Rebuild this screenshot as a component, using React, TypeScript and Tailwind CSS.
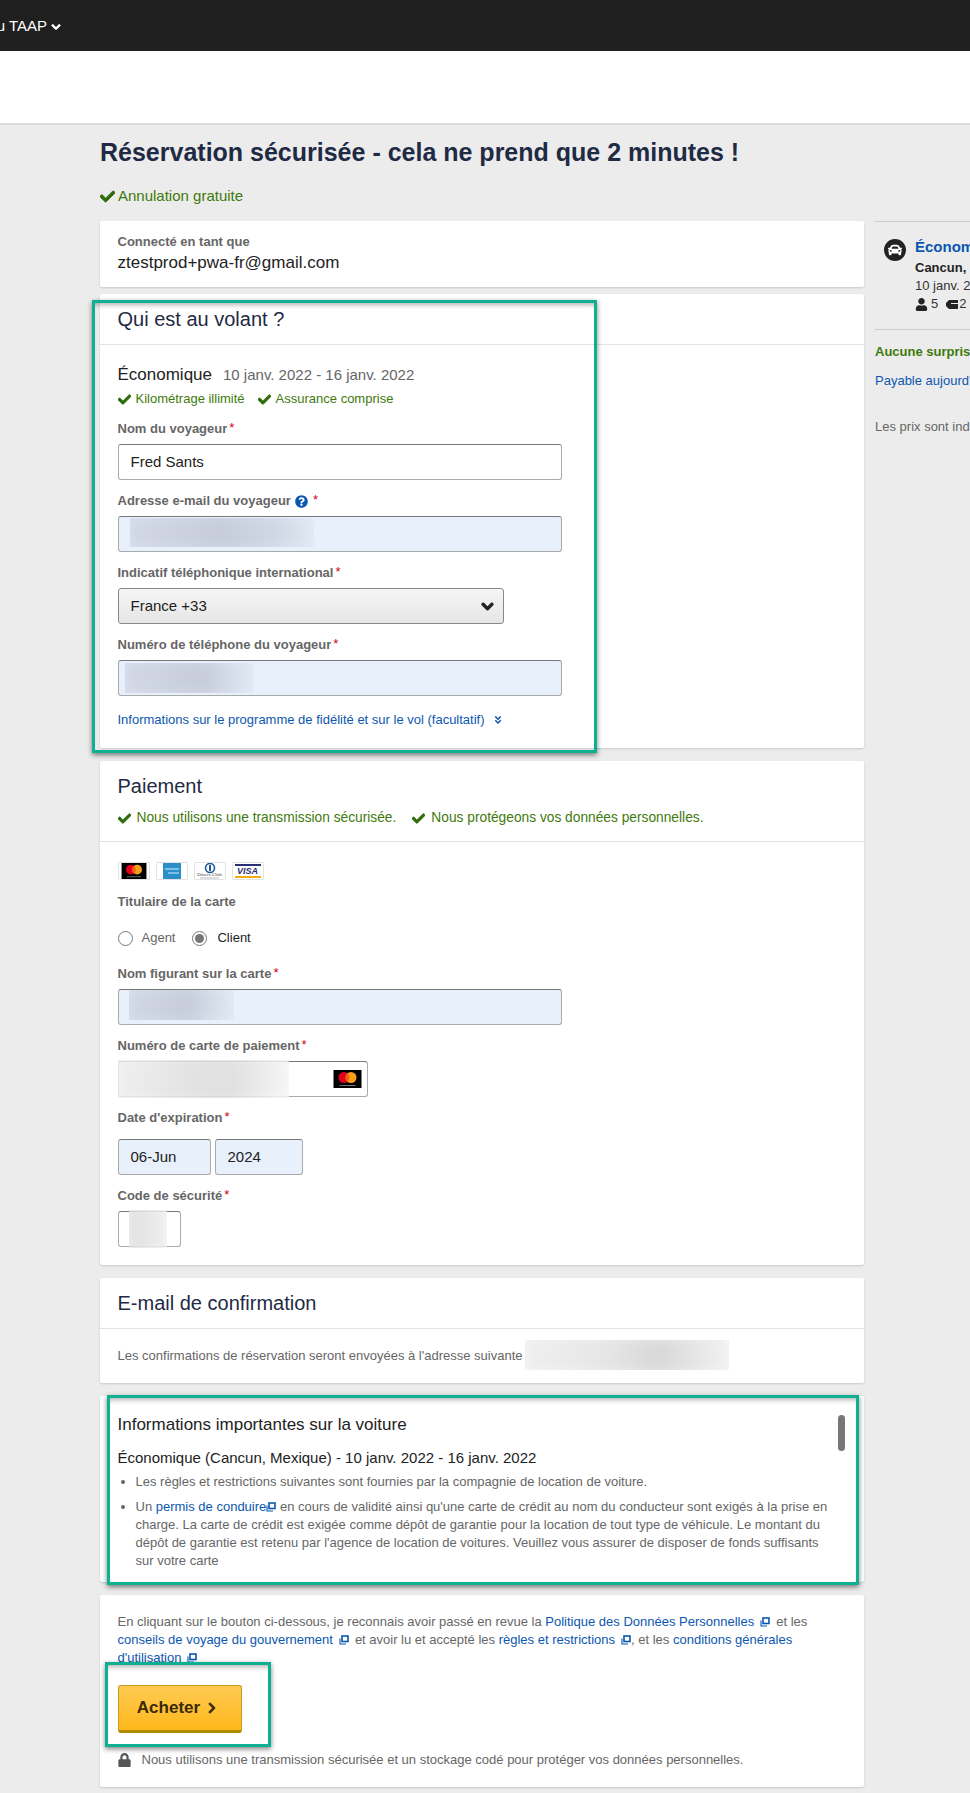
import React from 'react';
import { FaCar, FaCheck, FaChevronDown, FaChevronRight, FaAngleDoubleDown, FaLock, FaQuestionCircle, FaUser } from 'react-icons/fa';

const Check: React.FC = () => <FaCheck className="w-[13px] h-[13px] shrink-0 text-[#2f6d0c] stroke-current stroke-[30]" />;

const External: React.FC = () => (
  <svg viewBox="0 0 10 10" className="inline-block w-[10px] h-[10px] align-[-1px] text-[#0b57b0]">
    <rect x="3" y="1" width="6" height="5.5" fill="none" stroke="currentColor" strokeWidth="1.6" />
    <path d="M1 3.5v5.5h6" fill="none" stroke="currentColor" strokeWidth="1.1" />
  </svg>
);

const Label: React.FC<{ text: string; required?: boolean; children?: React.ReactNode }> = ({ text, required = true, children }) => (
  <div className="h-4 pt-[2px] flex items-center text-[13px] font-bold text-[#666] leading-4">
    <span>{text}</span>
    {children}
    {required && <span className="text-[#d0021b] font-normal ml-[2px] relative top-[-1px]">*</span>}
  </div>
);

const Input: React.FC<{ value?: string; filled?: boolean; className?: string; children?: React.ReactNode }> = ({
  value,
  filled,
  className = 'w-[444px]',
  children,
}) => (
  <div
    className={`relative h-9 mt-2 border border-[#aaa] border-t-[#777] rounded-[3px] flex items-center px-3 text-[15px] text-[#222] ${
      filled ? 'bg-[#e8f0fb]' : 'bg-white'
    } ${className}`}
  >
    {value}
    {children}
  </div>
);

const Blur: React.FC<{ className: string; blob: string }> = ({ className, blob }) => (
  <div className={`absolute overflow-hidden ${className}`}>
    <div className={`absolute inset-[-6px] blur-[7px] ${blob}`} />
  </div>
);

const Mastercard: React.FC<{ className?: string }> = ({ className }) => (
  <svg viewBox="0 0 28 18" className={className}>
    <rect width="28" height="18" fill="#000" />
    <circle cx="10.5" cy="7.5" r="5.5" fill="#e2001a" />
    <circle cx="17.5" cy="7.5" r="5.5" fill="#f79e1b" />
    <path d="M14 3.3a5.5 5.5 0 0 1 0 8.4a5.5 5.5 0 0 1 0-8.4z" fill="#f2600f" />
    <rect x="6" y="15" width="16" height="1" fill="#777" />
  </svg>
);

const CardLogos: React.FC = () => (
  <div className="flex gap-[6px] h-[18px]">
    <div className="w-[32px] h-[18px] border border-[#e3e3e3] rounded-[1px] flex items-center justify-center bg-white">
      <Mastercard className="w-[28px] h-[16px]" />
    </div>
    <div className="w-[32px] h-[18px] border border-[#e3e3e3] rounded-[1px] flex items-center justify-center bg-white">
      <svg viewBox="0 0 18 16" className="w-[18px] h-[16px]">
        <rect width="18" height="16" fill="#2a8fc9" />
        <rect x="2" y="5" width="14" height="2" fill="#7fc0e2" />
        <rect x="5" y="9" width="11" height="2" fill="#7fc0e2" />
      </svg>
    </div>
    <div className="w-[32px] h-[18px] border border-[#e3e3e3] rounded-[1px] flex items-center justify-center bg-white">
      <svg viewBox="0 0 27 16" className="w-[27px] h-[16px]">
        <circle cx="14" cy="5" r="4.5" fill="none" stroke="#1c5a96" strokeWidth="1.6" />
        <rect x="13" y="2" width="2" height="6" fill="#1c5a96" />
        <text x="13.5" y="13" textAnchor="middle" fontSize="5" fontFamily="Liberation Serif, serif" fill="#444">Diners Club</text>
        <rect x="4" y="14.5" width="19" height="1" fill="#bbb" />
      </svg>
    </div>
    <div className="w-[32px] h-[18px] border border-[#e3e3e3] rounded-[1px] flex flex-col items-center justify-between bg-white py-[1px]">
      <div className="w-[26px] h-[2px] bg-[#2a2f7a]" />
      <span className="text-[9px] leading-[9px] font-bold italic text-[#2a2f7a]">VISA</span>
      <div className="w-[26px] h-[2px] bg-[#f2ae14]" />
    </div>
  </div>
);

const GreenFrame: React.FC<{ className: string }> = ({ className }) => (
  <div
    className={`absolute pointer-events-none border-[3px] border-[#0fb092] shadow-[0_2px_5px_rgba(0,0,0,0.5),inset_0_5px_5px_-3px_rgba(0,0,0,0.3)] ${className}`}
  />
);

export default function App() {
  return (
    <div className="relative w-[970px] h-[1793px] overflow-hidden bg-[#ececec] font-['Liberation_Sans',Arial,sans-serif] text-[#222]">
      <div className="h-[51px] bg-[#202020] flex items-center pt-[2px]">
        <div className="w-[61px] flex items-center justify-end gap-[4px] overflow-hidden text-[15px] text-white whitespace-nowrap">
          <span>du TAAP</span>
          <FaChevronDown className="w-[10px] h-[10px] shrink-0 stroke-current stroke-[50]" />
        </div>
      </div>
      <div className="h-[74px] bg-white border-b-2 border-[#ddd]" />

      <div className="flex pl-[100px]">
        <div className="w-[764px] shrink-0">
          <h1 className="mt-[13px] text-[25px] leading-7 font-bold text-[#1f2a44] whitespace-nowrap">
            Réservation sécurisée - cela ne prend que 2 minutes !
          </h1>
          <div className="mt-[22px] h-4 flex items-center gap-[3px] text-[15px] text-[#3f7a0c]">
            <FaCheck className="w-[15px] h-[15px] text-[#2f6d0c] stroke-current stroke-[30]" />
            Annulation gratuite
          </div>

          <section className="mt-[17px] h-[66px] bg-white rounded-[2px] shadow-[0_1px_2px_rgba(0,0,0,0.15)] px-[17.5px] pt-[13px]">
            <div className="text-[13px] font-bold leading-4 text-[#666]">Connecté en tant que</div>
            <div className="mt-[3px] text-[17px] leading-5 text-[#222]">ztestprod+pwa-fr@gmail.com</div>
          </section>

          <section className="mt-[7px] bg-white rounded-[2px] shadow-[0_1px_2px_rgba(0,0,0,0.15)]">
            <div className="h-[51px] border-b border-[#e2e2e2] px-[17.5px] flex items-center">
              <h2 className="text-xl text-[#1f2a44]">Qui est au volant ?</h2>
            </div>
            <div className="px-[17.5px] pt-5 pb-[21px]">
              <div className="h-5 flex items-center gap-[11px]">
                <span className="text-[17px] text-[#222]">Économique</span>
                <span className="text-[15px] text-[#666]">10 janv. 2022 - 16 janv. 2022</span>
              </div>
              <div className="mt-[6px] h-4 flex items-center text-[13px] text-[#3f7a0c]">
                <Check />
                <span className="ml-[5px] mr-[13px]">Kilométrage illimité</span>
                <Check />
                <span className="ml-[5px]">Assurance comprise</span>
              </div>
              <div className="mt-[13px]">
                <Label text="Nom du voyageur" />
                <Input value="Fred Sants" />
              </div>
              <div className="mt-3">
                <Label text="Adresse e-mail du voyageur">
                  <FaQuestionCircle className="w-[13px] h-[13px] ml-[4px] mr-[3px] text-[#0b57b0]" />
                </Label>
                <Input filled>
                  <Blur
                    className="left-[11px] top-[1px] w-[184px] h-[29px]"
                    blob="bg-[linear-gradient(90deg,#d3d9e6,#c6ccda_50%,#d2d9e6_80%,#e6edf8)]"
                  />
                </Input>
              </div>
              <div className="mt-3">
                <Label text="Indicatif téléphonique international" />
                <div className="relative h-9 mt-2 w-[386px] border border-[#888] rounded-[3px] flex items-center px-3 text-[15px] text-[#222] bg-[linear-gradient(#f5f5f5,#e6e6e6)]">
                  France +33
                  <FaChevronDown className="absolute right-[9px] top-[11px] w-[13px] h-[13px] text-[#222] stroke-current stroke-[50]" />
                </div>
              </div>
              <div className="mt-3">
                <Label text="Numéro de téléphone du voyageur" />
                <Input filled>
                  <Blur
                    className="left-[6px] top-[2px] w-[129px] h-[30px]"
                    blob="bg-[linear-gradient(90deg,#d3d9e6,#c6ccdb_60%,#e6edf8)]"
                  />
                </Input>
              </div>
              <div className="mt-[15px] h-4 pt-[2px] flex items-center gap-[8px] text-[13px] text-[#0b57b0]">
                Informations sur le programme de fidélité et sur le vol (facultatif)
                <FaAngleDoubleDown className="w-[10px] h-[10px]" />
              </div>
            </div>
          </section>

          <section className="mt-[13px] bg-white rounded-[2px] shadow-[0_1px_2px_rgba(0,0,0,0.15)]">
            <div className="h-[81px] border-b border-[#e2e2e2] px-[17.5px] pt-[13px]">
              <h2 className="text-xl leading-6 text-[#1f2a44]">Paiement</h2>
              <div className="mt-3 h-4 flex items-center text-[13.75px] text-[#3f7a0c]">
                <Check />
                <span className="ml-[6px] mr-[16px]">Nous utilisons une transmission sécurisée.</span>
                <Check />
                <span className="ml-[6px]">Nous protégeons vos données personnelles.</span>
              </div>
            </div>
            <div className="px-[17.5px] pt-5 pb-[18px]">
              <CardLogos />
              <div className="mt-[13px]">
                <Label text="Titulaire de la carte" required={false} />
              </div>
              <div className="mt-[21px] h-4 flex items-center text-[13px]">
                <span className="w-[15px] h-[15px] rounded-full border border-[#777] bg-white" />
                <span className="ml-[9px] text-[#666]">Agent</span>
                <span className="ml-[17px] w-[15px] h-[15px] rounded-full border border-[#777] bg-white flex items-center justify-center">
                  <span className="w-[9px] h-[9px] rounded-full bg-[#777]" />
                </span>
                <span className="ml-[10px] text-[#222]">Client</span>
              </div>
              <div className="mt-[19px]">
                <Label text="Nom figurant sur la carte" />
                <Input filled>
                  <Blur
                    className="left-[10px] top-[0px] w-[105px] h-[30px]"
                    blob="bg-[linear-gradient(90deg,#d3d9e6,#c6ccda_55%,#e6edf8)]"
                  />
                </Input>
              </div>
              <div className="mt-3">
                <Label text="Numéro de carte de paiement" />
                <Input className="w-[250px]">
                  <Blur
                    className="left-[-1px] top-[-2px] w-[171px] h-[38px]"
                    blob="bg-[linear-gradient(90deg,#f0f0f0,#e2e2e2_45%,#e0e0e0_65%,#f8f8f8)]"
                  />
                  <Mastercard className="absolute right-[5px] top-[8px] w-[29px] h-[18px]" />
                </Input>
              </div>
              <div className="mt-3">
                <Label text="Date d'expiration" />
                <div className="mt-[6px] flex gap-1">
                  <Input filled value="06-Jun" className="w-[93px]" />
                  <Input filled value="2024" className="w-[88px]" />
                </div>
              </div>
              <div className="mt-3">
                <Label text="Code de sécurité" />
                <Input className="w-[63px]">
                  <Blur
                    className="left-[10px] top-[-2px] w-[38px] h-[38px]"
                    blob="bg-[linear-gradient(90deg,#e2e2e2,#e6e6e6_50%,#f4f4f4)]"
                  />
                </Input>
              </div>
            </div>
          </section>

          <section className="mt-[13px] bg-white rounded-[2px] shadow-[0_1px_2px_rgba(0,0,0,0.15)]">
            <div className="h-[51px] border-b border-[#e2e2e2] px-[17.5px] flex items-center">
              <h2 className="text-xl text-[#1f2a44]">E-mail de confirmation</h2>
            </div>
            <div className="relative px-[17.5px] pt-[19px] pb-[19px] text-[13px] leading-4 text-[#666]">
              Les confirmations de réservation seront envoyées à l'adresse suivante
              <Blur
                className="left-[425px] top-[11px] w-[204px] h-[30px]"
                blob="bg-[linear-gradient(90deg,#f0f0f0,#e6e6e6_40%,#d8d8d8_65%,#f4f4f4)]"
              />
            </div>
          </section>

          <section className="relative mt-[13px] h-[186px] bg-white rounded-[2px] shadow-[0_1px_2px_rgba(0,0,0,0.15)]">
            <div className="h-[169px] overflow-hidden px-[17.5px] pt-[19px]">
              <h3 className="text-[17px] leading-5 text-[#222]">Informations importantes sur la voiture</h3>
              <div className="mt-[13px] text-[15px] leading-5 text-[#222]">Économique (Cancun, Mexique) - 10 janv. 2022 - 16 janv. 2022</div>
              <ul className="mt-[5px] w-[718px] list-disc pl-[18px] text-[13px] leading-[18px] text-[#666] marker:text-[#666]">
                <li>Les règles et restrictions suivantes sont fournies par la compagnie de location de voiture.</li>
                <li className="mt-[7px]">
                  Un <span className="text-[#0b57b0]">permis de conduire</span>
                  <External /> en cours de validité ainsi qu'une carte de crédit au nom du conducteur sont exigés à la prise en charge. La
                  carte de crédit est exigée comme dépôt de garantie pour la location de tout type de véhicule. Le montant du dépôt de
                  garantie est retenu par l'agence de location de voitures. Veuillez vous assurer de disposer de fonds suffisants sur votre
                  carte
                </li>
              </ul>
            </div>
            <div className="absolute right-[19px] top-[19px] w-[7px] h-9 rounded-full bg-[#777]" />
          </section>

          <section className="mt-[13px] h-[192px] bg-white rounded-[2px] shadow-[0_1px_2px_rgba(0,0,0,0.15)] px-[17.5px] pt-[18px]">
            <p className="text-[13px] leading-[18px] text-[#666] w-[720px]">
              En cliquant sur le bouton ci-dessous, je reconnais avoir passé en revue la{' '}
              <span className="text-[#0b57b0]">Politique des Données Personnelles</span>
              <span className="mx-[6px]"><External /></span>
              et les <span className="text-[#0b57b0]">conseils de voyage du gouvernement</span>
              <span className="mx-[6px]"><External /></span>
              et avoir lu et accepté les <span className="text-[#0b57b0]">règles et restrictions</span>
              <span className="ml-[6px]"><External /></span>, et les{' '}
              <span className="text-[#0b57b0]">conditions générales d'utilisation</span>
              <span className="ml-[6px]"><External /></span>
            </p>
            <button className="mt-[18px] w-[124px] h-12 pr-[5px] rounded-[3px] border border-[#c79a1e] border-b-[3px] border-b-[#b08a00] bg-[linear-gradient(#ffca52,#ffb81c)] flex items-center justify-center gap-[7px] text-[17px] font-bold text-[#3a2a05]">
              Acheter
              <FaChevronRight className="w-[10px] h-[12px] stroke-current stroke-[40]" />
            </button>
            <div className="mt-[19px] h-4 flex items-center gap-[11px] text-[13px] text-[#666]">
              <FaLock className="w-[13px] h-[14px] text-[#555]" />
              Nous utilisons une transmission sécurisée et un stockage codé pour protéger vos données personnelles.
            </div>
          </section>
        </div>

        <aside className="ml-[11px] mt-[96px] w-[200px] shrink-0 whitespace-nowrap">
          <div className="h-[109px] border-y border-[#ccc] flex pl-[9px] pt-[17px]">
            <div className="w-[22px] h-[22px] rounded-full bg-[#222] flex items-center justify-center shrink-0">
              <FaCar className="w-[14px] h-[14px] text-white" />
            </div>
            <div className="ml-[9px]">
              <div className="text-[15px] font-bold leading-4 text-[#0b57b0]">Économique</div>
              <div className="mt-[5px] text-[13px] font-bold leading-4 text-[#222]">Cancun, Mexique</div>
              <div className="mt-[2px] text-[13px] leading-4 text-[#333]">10 janv. 2022</div>
              <div className="mt-[2px] h-4 flex items-center text-[13px] text-[#333]">
                <FaUser className="w-[13px] h-[13px] text-[#222]" />
                <span className="ml-[3px]">5</span>
                <svg viewBox="0 0 12 11" className="ml-[8px] w-3 h-[11px] text-[#222]">
                  <path d="M3 1h9v9H3L0 7V4z" fill="currentColor" />
                  <rect x="5" y="4" width="7" height="1" fill="#ececec" />
                </svg>
                <span className="ml-[1px]">2</span>
              </div>
            </div>
          </div>
          <div className="mt-[14px] text-[13px] font-bold leading-4 text-[#3f7a0c]">Aucune surprise</div>
          <div className="mt-[13px] text-[13px] leading-4 text-[#0b57b0]">Payable aujourd'hui</div>
          <div className="mt-[30px] text-[13px] leading-4 text-[#666]">Les prix sont indiqués</div>
        </aside>
      </div>

      <GreenFrame className="left-[92px] top-[300px] w-[505px] h-[453px]" />
      <GreenFrame className="left-[107px] top-[1395px] w-[752px] h-[190px]" />
      <GreenFrame className="left-[105px] top-[1662px] w-[166px] h-[85px]" />
    </div>
  );
}
